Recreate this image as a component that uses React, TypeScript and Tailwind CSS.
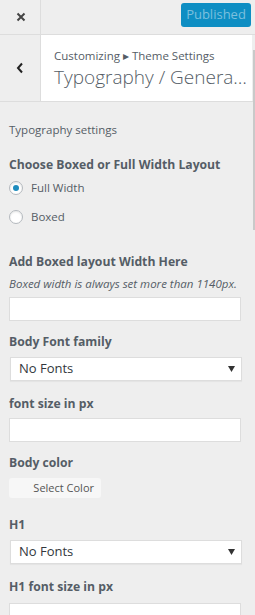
import React from 'react';

function Label({ children }: { children: React.ReactNode }) {
  return <div className="text-[12.2px] font-bold text-[#555d66] leading-[18px]">{children}</div>;
}

function TextInput() {
  return <div className="h-[24px] w-[232px] bg-white border border-[#ddd]" />;
}

function Select({ value }: { value: string }) {
  return (
    <div className="h-[24px] w-[232px] ml-[1px] bg-white border border-[#ddd] flex items-center justify-between pl-[8px] pr-[6px] shadow-[0_1px_1px_rgba(0,0,0,0.04)]">
      <span className="text-[13px] text-[#32373c]">{value}</span>
      <svg width="7" height="6" viewBox="0 0 7 6">
        <path d="M0 0 H7 L3.5 6 Z" fill="#333" />
      </svg>
    </div>
  );
}

function Radio({ label, checked }: { label: string; checked?: boolean }) {
  return (
    <div className="flex items-center gap-[8px] h-[18px]">
      <span className="w-[14px] h-[14px] rounded-full bg-white border border-[#b4b9be] flex items-center justify-center shadow-[inset_0_1px_2px_rgba(0,0,0,0.1)]">
        {checked && <span className="w-[6px] h-[6px] rounded-full bg-[#1e8cbe]" />}
      </span>
      <span className="text-[11.5px] text-[#555d66]">{label}</span>
    </div>
  );
}

export default function App() {
  return (
    <div className="w-[255px] h-[615px] bg-[#eeeeee] overflow-hidden relative" style={{ fontFamily: '"Open Sans", "Noto Sans", sans-serif' }}>
      {/* top bar */}
      <div className="h-[35px] flex border-b border-[#ddd]">
        <div className="w-[41px] border-r border-[#ddd] flex items-center justify-center pl-[1px]">
          <svg width="10" height="10" viewBox="0 0 10 10">
            <path d="M1.5 1.5 L8.5 8.5 M8.5 1.5 L1.5 8.5" stroke="#444" strokeWidth="2" />
          </svg>
        </div>
        <div className="flex-1 flex items-start justify-end pt-[3px] pr-[4px]">
          <div className="h-[24px] w-[70px] rounded-[3px] bg-[#0e8ec3] flex items-center justify-center text-[13px] text-[#7cc0de]">
            Published
          </div>
        </div>
      </div>

      {/* section header */}
      <div className="h-[67px] flex border-b border-[#ddd]">
        <div className="w-[41px] border-r border-[#ddd] flex items-center justify-center">
          <svg width="8" height="12" viewBox="0 0 8 12">
            <path d="M6 1.5 L2 6 L6 10.5" stroke="#222" strokeWidth="2" fill="none" />
          </svg>
        </div>
        <div className="w-[211px] bg-white pl-[13px] pt-[13px]">
          <div className="text-[11.5px] text-[#555d66] leading-[16px]">Customizing ▸ Theme Settings</div>
          <div className="text-[19px] text-[#555d66] leading-[26px] font-light whitespace-nowrap">
            Typography / Genera…
          </div>
        </div>
      </div>

      {/* scrollbar */}
      <div className="absolute right-[0px] top-[50px] w-[2px] h-[180px] bg-[#c9c9c9]" />

      <div className="pl-[9px] pt-[20px]">
        <div className="text-[11.5px] text-[#555d66] leading-[16px]">Typography settings</div>

        <div className="mt-[18px]">
          <Label>Choose Boxed or Full Width Layout</Label>
          <div className="mt-[5px] flex flex-col gap-[11px]">
            <Radio label="Full Width" checked />
            <Radio label="Boxed" />
          </div>
        </div>

        <div className="mt-[27px]">
          <Label>Add Boxed layout Width Here</Label>
          <div className="mt-[5px] text-[11.5px] italic text-[#555d66] leading-[16px]">
            Boxed width is always set more than 1140px.
          </div>
          <div className="mt-[5px]">
            <TextInput />
          </div>
        </div>

        <div className="mt-[12px]">
          <Label>Body Font family</Label>
          <div className="mt-[6px]">
            <Select value="No Fonts" />
          </div>
        </div>

        <div className="mt-[14px]">
          <Label>font size in px</Label>
          <div className="mt-[5px]">
            <TextInput />
          </div>
        </div>

        <div className="mt-[12px]">
          <Label>Body color</Label>
          <div className="mt-[6px] h-[20px] w-[92px] rounded-[3px] bg-[#f7f7f7] flex items-center justify-end pr-[7px] text-[11px] text-[#555]">
            Select Color
          </div>
        </div>

        <div className="mt-[18px]">
          <Label>H1</Label>
          <div className="mt-[6px]">
            <Select value="No Fonts" />
          </div>
        </div>

        <div className="mt-[14px]">
          <Label>H1 font size in px</Label>
          <div className="mt-[7px]">
            <TextInput />
          </div>
        </div>
      </div>
    </div>
  );
}
